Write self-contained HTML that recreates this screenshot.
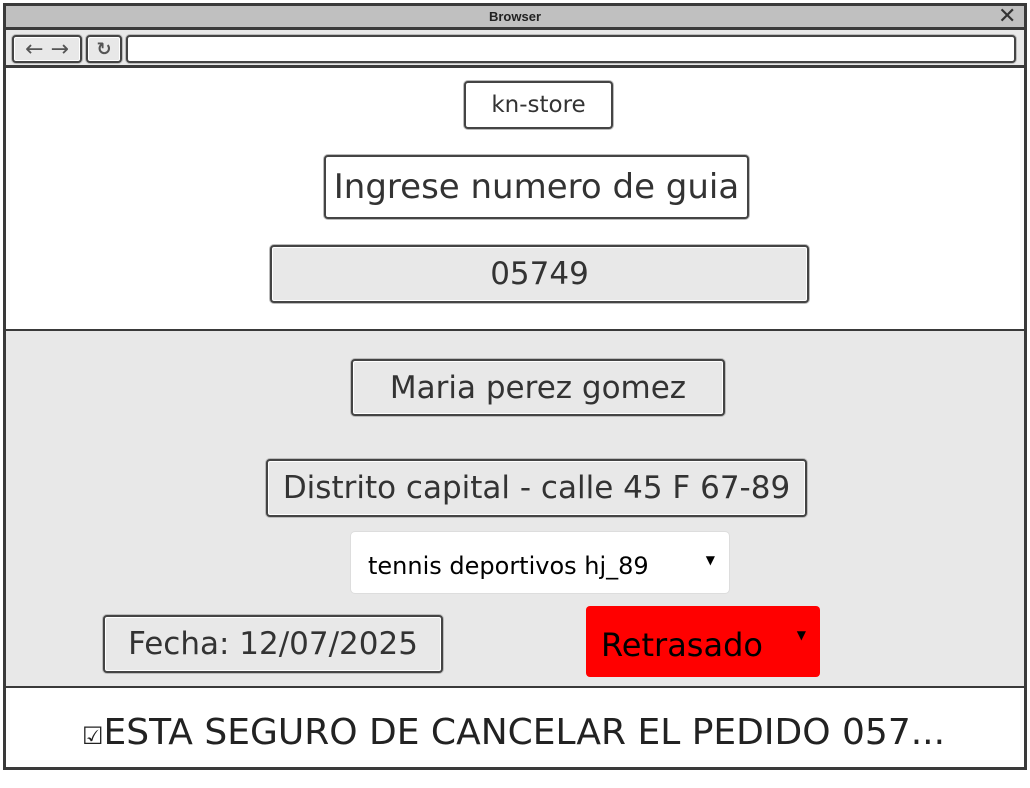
<html><head><style>
body{margin:0;width:1030px;height:788px;background:#fff;position:relative;overflow:hidden;font-family:"DejaVu Sans","Liberation Sans",sans-serif;color:#333}
.a{position:absolute;box-sizing:border-box}
.bx{border:2px solid #444;border-radius:4px;box-shadow:inset 0 0 0 1px #fff,0 0 0 1px #bbb;display:flex;align-items:center;justify-content:center;white-space:nowrap}
</style></head><body>
<div class="a" style="left:3px;top:3px;width:1024px;height:767px;border:3px solid #3a3a3a"></div>
<div class="a" style="left:6px;top:6px;width:1018px;height:21px;background:#c0c0c0;font:bold 13px 'Liberation Sans',sans-serif;text-align:center;line-height:21px;color:#222">Browser</div>
<div class="a" style="left:998px;top:3px;font:22px 'Liberation Sans';color:#333">✕</div>
<div class="a" style="left:6px;top:27px;width:1018px;height:3px;background:#3a3a3a"></div>
<div class="a" style="left:6px;top:30px;width:1018px;height:38px;background:#e8e8e8;border-bottom:3px solid #3a3a3a"></div>
<div class="a bx" style="left:12px;top:35px;width:70px;height:28px;background:#e8e8e8;font-size:22px;color:#555">←&nbsp;→</div>
<div class="a bx" style="left:86px;top:35px;width:36px;height:28px;background:#e8e8e8;font-size:18px;color:#555;font-weight:bold">↻</div>
<div class="a bx" style="left:126px;top:35px;width:890px;height:28px;background:#fff"></div>
<div class="a" style="left:6px;top:329px;width:1018px;height:359px;background:#e8e8e8;border-top:2px solid #3a3a3a;border-bottom:2px solid #3a3a3a"></div>
<div class="a bx" style="left:464px;top:81px;width:149px;height:48px;font-size:23px;background:#fff">kn-store</div>
<div class="a bx" style="left:324px;top:155px;width:425px;height:64px;font-size:34px;background:#fff">Ingrese numero de guia</div>
<div class="a bx" style="left:270px;top:245px;width:539px;height:58px;font-size:31px;background:#e8e8e8">05749</div>
<div class="a bx" style="left:351px;top:359px;width:374px;height:57px;font-size:31px;background:#e8e8e8">Maria perez gomez</div>
<div class="a bx" style="left:266px;top:459px;width:541px;height:58px;font-size:31px;background:#e8e8e8">Distrito capital - calle 45 F 67-89</div>
<div class="a" style="left:351px;top:532px;width:378px;height:61px;background:#fff;border-radius:4px;box-shadow:0 0 0 1px #ddd;font-size:24px;color:#000;line-height:68px;padding-left:17px">tennis deportivos hj_89<span style="position:absolute;right:14px;top:-6px;font-size:12px">▼</span></div>
<div class="a bx" style="left:103px;top:615px;width:340px;height:58px;font-size:31px;background:#e8e8e8">Fecha: 12/07/2025</div>
<div class="a" style="left:586px;top:606px;width:234px;height:71px;background:#f00;border-radius:4px;font-size:32px;color:#000;line-height:78px;padding-left:15px">Retrasado<span style="position:absolute;right:14px;top:-10px;font-size:12px">▼</span></div>
<div class="a" style="left:82px;top:712px;font-size:36px;color:#222;white-space:nowrap"><span style="font-size:24px">☑</span>ESTA SEGURO DE CANCELAR EL PEDIDO 057...</div>
</body></html>
